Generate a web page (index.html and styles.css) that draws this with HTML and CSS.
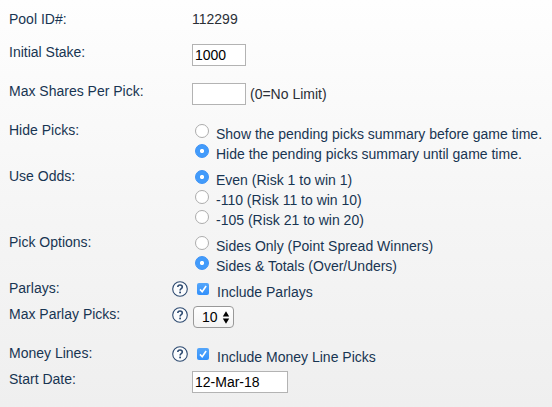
FILE: index.html
```html
<!DOCTYPE html>
<html lang="en">
<head>
<meta charset="utf-8">
<title>Pool Settings</title>
<link rel="stylesheet" href="styles.css">
</head>
<body>
<svg class="defs" width="0" height="0" aria-hidden="true">
  <symbol id="help" viewBox="0 0 16 16">
    <circle cx="8" cy="8" r="7.3" fill="#fbfcfd" stroke="#2d4a70" stroke-width="1.1"/>
    <path d="M5.8 6.1C5.8 4.8 6.7 4 8 4s2.3.8 2.3 2c0 1.6-2.2 1.6-2.2 3.4" fill="none" stroke="#2d4a70" stroke-width="1.6"/>
    <rect x="7.2" y="10.6" width="1.8" height="1.7" fill="#2d4a70"/>
  </symbol>
  <symbol id="check" viewBox="0 0 12 12">
    <path d="M3 6.4 5.2 8.7 9.1 3" fill="none" stroke="#fff" stroke-width="1.6"/>
  </symbol>
</svg>
<form class="settings">
  <div class="row id-row"><span class="label">Pool ID#:</span><span class="help"></span><span class="value plain">112299</span></div>
  <div class="row stake-row"><span class="label">Initial Stake:</span><span class="help"></span><div class="value"><input class="field" type="text" value="1000"></div></div>
  <div class="row shares-row"><span class="label">Max Shares Per Pick:</span><span class="help"></span><div class="value"><input class="field" type="text"><span class="note">(0=No Limit)</span></div></div>
  <div class="row hide-row"><span class="label">Hide Picks:</span><span class="help"></span>
    <div class="options">
      <label class="option"><input class="radio" type="radio" name="hide"><span>Show the pending picks summary before game time.</span></label>
      <label class="option"><input class="radio" type="radio" name="hide" checked><span>Hide the pending picks summary until game time.</span></label>
    </div>
  </div>
  <div class="row odds-row"><span class="label">Use Odds:</span><span class="help"></span>
    <div class="options">
      <label class="option"><input class="radio" type="radio" name="odds" checked><span>Even (Risk 1 to win 1)</span></label>
      <label class="option"><input class="radio" type="radio" name="odds"><span>-110 (Risk 11 to win 10)</span></label>
      <label class="option"><input class="radio" type="radio" name="odds"><span>-105 (Risk 21 to win 20)</span></label>
    </div>
  </div>
  <div class="row pick-row"><span class="label">Pick Options:</span><span class="help"></span>
    <div class="options">
      <label class="option"><input class="radio" type="radio" name="pick"><span>Sides Only (Point Spread Winners)</span></label>
      <label class="option"><input class="radio" type="radio" name="pick" checked><span>Sides &amp; Totals (Over/Unders)</span></label>
    </div>
  </div>
  <div class="row parlay-row"><span class="label">Parlays:</span><span class="help"><svg><use href="#help"/></svg></span>
    <div class="options"><label class="option"><span class="check"><svg><use href="#check"/></svg></span><span>Include Parlays</span></label></div>
  </div>
  <div class="row max-row"><span class="label">Max Parlay Picks:</span><span class="help"><svg><use href="#help"/></svg></span>
    <div class="value"><button class="select" type="button"><span>10</span><svg viewBox="0 0 8 13"><path d="M.8 5.6 4 .3l3.2 5.3zM.8 7.4 4 12.7l3.2-5.3z"/></svg></button></div>
  </div>
  <div class="row money-row"><span class="label">Money Lines:</span><span class="help"><svg><use href="#help"/></svg></span>
    <div class="options"><label class="option"><span class="check"><svg><use href="#check"/></svg></span><span>Include Money Line Picks</span></label></div>
  </div>
  <div class="row date-row"><span class="label">Start Date:</span><span class="help"></span><div class="value"><input class="field date" type="text" value="12-Mar-18"></div></div>
</form>
</body>
</html>
```
FILE: styles.css
```css
* { box-sizing: border-box; }
html { height: 100%; }
body {
  margin: 0;
  height: 407px;
  overflow: hidden;
  background: linear-gradient(#fefefe 0%, #f5f5f5 55%, #efefef 100%);
  color: #183552;
  font: 14px/20px "Liberation Sans", Arial, sans-serif;
}
.defs { display: block; }
.settings { padding: 9px 0 0 9px; white-space: nowrap; }
.row { display: grid; grid-template-columns: 163px 20px 1fr; align-items: start; }
.id-row { height: 33px; }
.stake-row, .shares-row, .max-row { height: 39px; }
.hide-row, .pick-row { height: 46px; }
.odds-row { height: 66px; }
.parlay-row, .money-row { height: 26px; }
.date-row { height: 38px; }
.help { height: 16px; margin-top: 3px; }
.help svg { display: block; width: 16px; height: 16px; }
.value { display: flex; align-items: flex-start; }
.value:not(.plain) { padding-top: 2px; }
.plain, .note { color: #2b2f36; }
.note { margin: 1px 0 0 4px; }
.field {
  width: 54px;
  height: 22px;
  margin: 0;
  padding: 0 2px;
  border: 1px solid #b3b3b3;
  border-radius: 0;
  background: #fff;
  color: #000;
  font: inherit;
}
.date { width: 96px; }
.options { padding-top: 4px; }
.option { display: flex; height: 20px; }
.radio {
  appearance: none;
  width: 14px;
  height: 14px;
  margin: 0 7px 0 3px;
  border: 1px solid #acacac;
  border-radius: 50%;
  background: #fff;
}
.radio:checked {
  border-color: #3b91f5;
  background: radial-gradient(circle, #fff 0 1.8px, #429bfb 2.4px);
}
.check {
  width: 12px;
  height: 12px;
  margin: 1px 8px 0 5px;
  border-radius: 2px;
  background: linear-gradient(#55a6fa, #3290fb);
}
.check svg { display: block; width: 12px; height: 12px; }
.select {
  display: flex;
  align-items: center;
  justify-content: space-between;
  width: 41px;
  height: 22px;
  margin: 0 0 0 1px;
  padding: 0 3px 0 8px;
  border: 1px solid #999;
  border-radius: 4px;
  background: linear-gradient(#fff, #f3f3f3);
  color: #000;
  font: inherit;
}
.select svg { width: 8px; height: 13px; }
```
